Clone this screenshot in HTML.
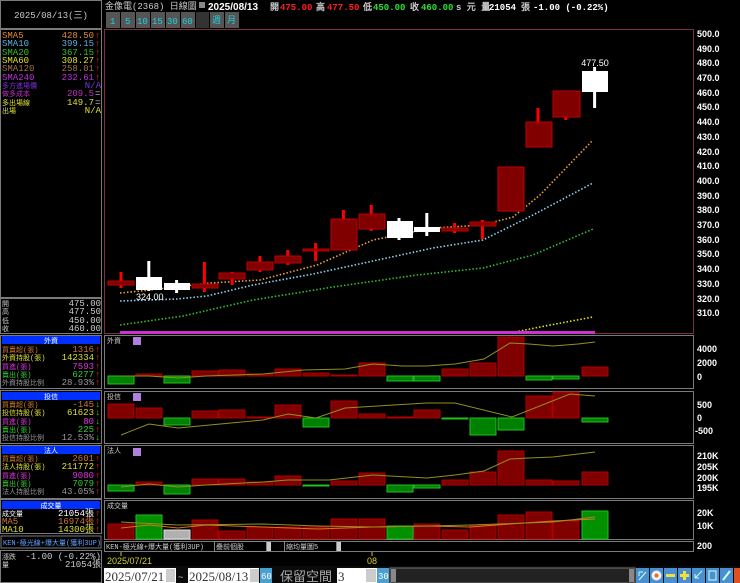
<!DOCTYPE html>
<html><head><meta charset="utf-8"><style>
html,body{margin:0;padding:0;background:#000;width:740px;height:583px;overflow:hidden}
svg{display:block}
text{font-family:"Liberation Mono","WenQuanYi Zen Hei",monospace;font-size:9px}
text.l{font-size:7px}
.ax{font-family:"Liberation Sans",sans-serif;font-weight:bold;font-size:9px;fill:#fff}
</style></head><body>
<svg width="740" height="583" viewBox="0 0 740 583" xmlns="http://www.w3.org/2000/svg">
<rect width="740" height="583" fill="#000"/>
<g fill="none" stroke="#7a7a7a" stroke-width="1">
<rect x="0.5" y="0.5" width="101" height="28"/>
<rect x="0.5" y="29.5" width="101" height="268"/>
<rect x="0.5" y="298.5" width="101" height="35"/>
<rect x="0.5" y="335.5" width="101" height="53"/>
<rect x="0.5" y="390.5" width="101" height="53"/>
<rect x="0.5" y="445.5" width="101" height="53"/>
<rect x="0.5" y="499.5" width="101" height="34"/>
<rect x="0.5" y="550.5" width="101" height="32"/>
</g>
<text x="51" y="18" fill="#ccc" text-anchor="middle" font-size="8">2025/08/13(三)</text>
<g font-size="8">
<text x="2" y="38" fill="#e08a30" font-size="7">SMA5</text><text x="94" y="38" fill="#e08a30" text-anchor="end">428.50</text>
<text x="2" y="46" fill="#60b0e0" font-size="7">SMA10</text><text x="94" y="46" fill="#60b0e0" text-anchor="end">399.15</text>
<text x="2" y="55" fill="#30c030" font-size="7">SMA20</text><text x="94" y="55" fill="#30c030" text-anchor="end">367.15</text>
<text x="2" y="63" fill="#e0e030" font-size="7">SMA60</text><text x="94" y="63" fill="#e0e030" text-anchor="end">308.27</text>
<text x="2" y="71" fill="#a07050" font-size="7">SMA120</text><text x="94" y="71" fill="#a07050" text-anchor="end">258.01</text>
<text x="2" y="80" fill="#c030e0" font-size="7">SMA240</text><text x="94" y="80" fill="#c030e0" text-anchor="end">232.61</text>
<text class="l" x="2" y="88" fill="#8030e0">多方進場價</text><text x="101" y="88" fill="#8030e0" text-anchor="end">N/A</text>
<text class="l" x="2" y="96" fill="#c030c0">做多成本</text><text x="94" y="96" fill="#c030c0" text-anchor="end">209.5</text>
<text class="l" x="2" y="105" fill="#e0e030">多出場線</text><text x="94" y="105" fill="#e0e030" text-anchor="end">149.7</text>
<text class="l" x="2" y="113" fill="#e0e030">出場</text><text x="101" y="113" fill="#e0e030" text-anchor="end">N/A</text>
<g fill="#ff2020"><text x="95" y="38">↑</text><text x="95" y="46">↑</text><text x="95" y="55">↑</text><text x="95" y="63">↑</text><text x="95" y="71">↑</text><text x="95" y="80">↑</text></g>
<g fill="#ccc"><text x="95" y="96">=</text><text x="95" y="105">=</text></g>
<g fill="#ccc">
<text class="l" x="2" y="306">開</text><text x="101" y="306" text-anchor="end">475.00</text>
<text class="l" x="2" y="314">高</text><text x="101" y="314" text-anchor="end">477.50</text>
<text class="l" x="2" y="323">低</text><text x="101" y="323" text-anchor="end">450.00</text>
<text class="l" x="2" y="331">收</text><text x="101" y="331" text-anchor="end">460.00</text>
</g>
<rect x="2" y="336" width="98" height="8" fill="#0030ff"/><text class="l" x="51" y="343" fill="#fff" text-anchor="middle">外資</text>
<text class="l" x="2" y="352" fill="#d07830">買賣超(張)</text><text x="94" y="352" fill="#d07830" text-anchor="end">1316</text>
<text class="l" x="2" y="360" fill="#e0e030">外資持股(張)</text><text x="94" y="360" fill="#e0e030" text-anchor="end">142334</text>
<text class="l" x="2" y="369" fill="#e030e0">買進(張)</text><text x="94" y="369" fill="#e030e0" text-anchor="end">7593</text>
<text class="l" x="2" y="377" fill="#30d030">賣出(張)</text><text x="94" y="377" fill="#30d030" text-anchor="end">6277</text>
<text class="l" x="2" y="385" fill="#999">外資持股比例</text><text x="94" y="385" fill="#999" text-anchor="end">28.93%</text>
<g fill="#ff2020"><text x="95" y="352">↑</text><text x="95" y="360">↑</text><text x="95" y="369">↑</text><text x="95" y="377">↑</text><text x="95" y="385">↑</text></g>
<rect x="2" y="392" width="98" height="8" fill="#0030ff"/><text class="l" x="51" y="399" fill="#fff" text-anchor="middle">投信</text>
<text class="l" x="2" y="407" fill="#d07830">買賣超(張)</text><text x="94" y="407" fill="#d07830" text-anchor="end">-145</text>
<text class="l" x="2" y="415" fill="#e0e030">投信持股(張)</text><text x="94" y="415" fill="#e0e030" text-anchor="end">61623</text>
<text class="l" x="2" y="424" fill="#e030e0">買進(張)</text><text x="94" y="424" fill="#e030e0" text-anchor="end">80</text>
<text class="l" x="2" y="432" fill="#30d030">賣出(張)</text><text x="94" y="432" fill="#30d030" text-anchor="end">225</text>
<text class="l" x="2" y="440" fill="#999">投信持股比例</text><text x="94" y="440" fill="#999" text-anchor="end">12.53%</text>
<g fill="#20d020"><text x="95" y="407">↓</text><text x="95" y="415">↓</text><text x="95" y="424">↓</text><text x="95" y="440">↓</text></g><text x="95" y="432" fill="#ff2020">↑</text>
<rect x="2" y="446" width="98" height="8" fill="#0030ff"/><text class="l" x="51" y="453" fill="#fff" text-anchor="middle">法人</text>
<text class="l" x="2" y="461" fill="#d07830">買賣超(張)</text><text x="94" y="461" fill="#d07830" text-anchor="end">2601</text>
<text class="l" x="2" y="469" fill="#e0e030">法人持股(張)</text><text x="94" y="469" fill="#e0e030" text-anchor="end">211772</text>
<text class="l" x="2" y="478" fill="#e030e0">買進(張)</text><text x="94" y="478" fill="#e030e0" text-anchor="end">9080</text>
<text class="l" x="2" y="486" fill="#30d030">賣出(張)</text><text x="94" y="486" fill="#30d030" text-anchor="end">7079</text>
<text class="l" x="2" y="494" fill="#999">法人持股比例</text><text x="94" y="494" fill="#999" text-anchor="end">43.05%</text>
<g fill="#ff2020"><text x="95" y="461">↑</text><text x="95" y="469">↑</text><text x="95" y="478">↑</text><text x="95" y="486">↑</text><text x="95" y="494">↑</text></g>
<rect x="2" y="501" width="98" height="8" fill="#0030ff"/><text class="l" x="51" y="508" fill="#fff" text-anchor="middle">成交量</text>
<text class="l" x="2" y="516" fill="#fff">成交量</text><text x="94" y="516" fill="#fff" text-anchor="end">21054張</text>
<text x="2" y="524" fill="#d07830" font-size="7">MA5</text><text x="94" y="524" fill="#d07830" text-anchor="end">16974張</text>
<text x="2" y="532" fill="#e0e030" font-size="7">MA10</text><text x="94" y="532" fill="#e0e030" text-anchor="end">14300張</text>
<g fill="#ff2020"><text x="95" y="516">↑</text><text x="95" y="524">↑</text><text x="95" y="532">↑</text></g>
<rect x="1" y="536" width="100" height="12" fill="#000" stroke="#7a7a7a"/>
<text class="l" x="3" y="545" fill="#60a0ff">KEN-極光線+爆大量(獲利3UP)</text>
<text class="l" x="2" y="559" fill="#ccc">漲跌</text><text x="101" y="559" fill="#ccc" text-anchor="end">-1.00 (-0.22%)</text>
<text class="l" x="2" y="567" fill="#ccc">量</text><text x="101" y="567" fill="#ccc" text-anchor="end">21054張</text>
</g>

<text x="105" y="9" fill="#ccc" font-size="8">金像電(2368)   日線圖</text>
<rect x="199" y="2" width="6" height="6" fill="#888"/>
<text x="208" y="10" style="font-family:'Liberation Sans',sans-serif;font-weight:bold;font-size:10px" fill="#fff">2025/08/13</text>
<g style="font-family:'Liberation Sans',sans-serif;font-weight:bold;font-size:9px">
<text x="270" y="10" fill="#ccc" font-size="8">開</text><text x="280" y="10" fill="#ff2020">475.00</text>
<text x="316" y="10" fill="#ccc" font-size="8">高</text><text x="327" y="10" fill="#ff2020">477.50</text>
<text x="363" y="10" fill="#ccc" font-size="8">低</text><text x="373" y="10" fill="#30e030">450.00</text>
<text x="410" y="10" fill="#ccc" font-size="8">收</text><text x="421" y="10" fill="#30e030">460.00</text>
<text x="456" y="10" fill="#ccc" font-size="8">s 元  量</text><text x="489" y="10" fill="#fff">21054</text>
<text x="521" y="10" fill="#ccc" font-size="8">張</text><text x="533" y="10" fill="#fff">-1.00 (-0.22%)</text>
</g>
<g style="font-family:'Liberation Sans',sans-serif;font-size:10px" fill="#20d0e0">
<rect x="106" y="12" width="14" height="16" fill="#555"/><text x="110" y="24">1</text>
<rect x="121" y="12" width="14" height="16" fill="#555"/><text x="125" y="24">5</text>
<rect x="136" y="12" width="14" height="16" fill="#555"/><text x="137" y="24">10</text>
<rect x="151" y="12" width="14" height="16" fill="#555"/><text x="152" y="24">15</text>
<rect x="166" y="12" width="14" height="16" fill="#555"/><text x="167" y="24">30</text>
<rect x="181" y="12" width="14" height="16" fill="#555"/><text x="182" y="24">60</text>
<rect x="196" y="12" width="13" height="16" fill="#333"/>
<rect x="210" y="12" width="14" height="16" fill="#555"/><text x="212" y="23" font-size="8">週</text>
<rect x="225" y="12" width="14" height="16" fill="#555"/><text x="227" y="23" font-size="8">月</text>
</g>

<rect x="104.5" y="29.5" width="589" height="304" fill="none" stroke="#7a3040"/>
<g class="ax">
<text x="697" y="37" class="ax">500.0</text><text x="697" y="52" class="ax">490.0</text><text x="697" y="66" class="ax">480.0</text>
<text x="697" y="81" class="ax">470.0</text><text x="697" y="96" class="ax">460.0</text><text x="697" y="110" class="ax">450.0</text>
<text x="697" y="125" class="ax">440.0</text><text x="697" y="140" class="ax">430.0</text><text x="697" y="155" class="ax">420.0</text>
<text x="697" y="169" class="ax">410.0</text><text x="697" y="184" class="ax">400.0</text><text x="697" y="199" class="ax">390.0</text>
<text x="697" y="213" class="ax">380.0</text><text x="697" y="228" class="ax">370.0</text><text x="697" y="243" class="ax">360.0</text>
<text x="697" y="257" class="ax">350.0</text><text x="697" y="272" class="ax">340.0</text><text x="697" y="287" class="ax">330.0</text>
<text x="697" y="302" class="ax">320.0</text><text x="697" y="316" class="ax">310.0</text>
</g>
<g fill="none" stroke-width="1.6" stroke-dasharray="1.5 2">
<polyline stroke="#f0a040" points="120,293 150,290 210,283 260,280 317,265 373,240 433,228 483,225 513,217 540,195 593,140"/>
<polyline stroke="#90d0f0" points="120,301 177,299 207,296 253,285 313,274 387,258 433,248 483,240 533,215 593,183"/>
<polyline stroke="#30c030" points="120,325 183,316 253,300 333,287 417,275 483,268 533,255 593,229"/>
<polyline stroke="#e0e020" points="515,332 545,326 593,317"/>
</g>
<rect x="120" y="331" width="475" height="3" fill="#d030d0"/>
<g>
<rect x="119.5" y="272" width="3" height="16" fill="#f00"/><rect x="108" y="281" width="26" height="4" fill="#800000" stroke="#c00000"/>
<rect x="147.3" y="261" width="3" height="30" fill="#fff"/><rect x="136" y="277" width="26" height="13" fill="#fff"/>
<rect x="175.1" y="280" width="3" height="13" fill="#fff"/><rect x="164" y="283" width="26" height="7" fill="#fff"/>
<rect x="202.9" y="262" width="3" height="30" fill="#f00"/><rect x="192" y="284" width="26" height="4" fill="#800000" stroke="#c00000"/>
<rect x="230.7" y="272" width="3" height="13" fill="#f00"/><rect x="219" y="273" width="26" height="6" fill="#800000" stroke="#c00000"/>
<rect x="258.5" y="256" width="3" height="16" fill="#f00"/><rect x="247" y="262" width="26" height="8" fill="#800000" stroke="#c00000"/>
<rect x="286.3" y="250" width="3" height="15" fill="#f00"/><rect x="275" y="256" width="26" height="7" fill="#800000" stroke="#c00000"/>
<rect x="314.1" y="243" width="3" height="18" fill="#f00"/><rect x="303" y="249" width="26" height="2" fill="#800000" stroke="#c00000"/>
<rect x="341.9" y="210" width="3" height="40" fill="#f00"/><rect x="331" y="219" width="26" height="31" fill="#800000" stroke="#c00000"/>
<rect x="369.7" y="205" width="3" height="26" fill="#f00"/><rect x="359" y="214" width="26" height="15" fill="#800000" stroke="#c00000"/>
<rect x="397.5" y="218" width="3" height="22" fill="#fff"/><rect x="387" y="221" width="26" height="17" fill="#fff"/>
<rect x="425.3" y="213" width="3" height="23" fill="#fff"/><rect x="414" y="227" width="26" height="5" fill="#fff"/>
<rect x="453.1" y="223" width="3" height="10" fill="#f00"/><rect x="442" y="228" width="26" height="3" fill="#800000" stroke="#c00000"/>
<rect x="480.9" y="220" width="3" height="19" fill="#f00"/><rect x="470" y="222" width="26" height="4" fill="#800000" stroke="#c00000"/>
<rect x="498" y="167" width="26" height="44" fill="#800000" stroke="#c00000"/>
<rect x="536.5" y="108" width="3" height="39" fill="#f00"/><rect x="526" y="122" width="26" height="25" fill="#800000" stroke="#c00000"/>
<rect x="564.3" y="91" width="3" height="29" fill="#f00"/><rect x="553" y="91" width="27" height="26" fill="#800000" stroke="#c00000"/>
<rect x="593.1" y="67" width="3" height="41" fill="#fff"/><rect x="582" y="71" width="26" height="21" fill="#fff"/>
</g>
<text x="595" y="66" fill="#fff" text-anchor="middle" style="font-family:'Liberation Sans',sans-serif;font-size:9px">477.50</text>
<text x="136" y="300" fill="#fff" style="font-family:'Liberation Sans',sans-serif;font-size:9px">324.00</text>

<g fill="none" stroke="#7a7a7a">
<rect x="104.5" y="335.5" width="589" height="53"/>
<rect x="104.5" y="391.5" width="589" height="52"/>
<rect x="104.5" y="445.5" width="589" height="53"/>
<rect x="104.5" y="500.5" width="589" height="39"/>
</g>
<g fill="#ccc"><text class="l" x="107" y="343">外資</text><text class="l" x="107" y="399">投信</text><text class="l" x="107" y="453">法人</text><text class="l" x="107" y="508">成交量</text></g>
<g fill="#b080e0"><rect x="133" y="337" width="8" height="8"/><rect x="133" y="393" width="8" height="8"/><rect x="133" y="448" width="8" height="8"/></g>
<g class="ax">
<text x="697" y="352" class="ax">4000</text><text x="697" y="366" class="ax">2000</text><text x="697" y="380" class="ax">0</text>
<text x="697" y="408" class="ax">500</text><text x="697" y="421" class="ax">0</text><text x="695" y="434" class="ax">-500</text>
<text x="697" y="459" class="ax">210K</text><text x="697" y="470" class="ax">205K</text><text x="697" y="481" class="ax">200K</text><text x="697" y="491" class="ax">195K</text>
<text x="697" y="516" class="ax">20K</text><text x="697" y="529" class="ax">10K</text><text x="697" y="549" class="ax">200</text>
</g>
<g stroke-width="1">
<g fill="#008000" stroke="#20c020">
<rect x="108" y="376" width="26" height="8"/><rect x="164" y="376" width="26" height="7"/><rect x="387" y="376" width="26" height="5"/><rect x="414" y="376" width="26" height="5"/><rect x="526" y="376" width="26" height="4"/><rect x="553" y="376" width="26" height="3"/>
</g>
<g fill="#800000" stroke="#b00000">
<rect x="136" y="374" width="26" height="2"/><rect x="192" y="371" width="26" height="5"/><rect x="219" y="370" width="26" height="6"/><rect x="247" y="374" width="26" height="2"/><rect x="275" y="369" width="26" height="7"/><rect x="303" y="373" width="26" height="3"/><rect x="331" y="375" width="26" height="1"/><rect x="359" y="363" width="26" height="13"/><rect x="442" y="369" width="26" height="7"/><rect x="470" y="363" width="26" height="13"/><rect x="498" y="337" width="26" height="39"/><rect x="582" y="367" width="26" height="9"/>
</g>
</g>
<polyline fill="none" stroke="#909020" stroke-width="1" points="121,376 149,376 178,378 206,376 263,374 304,370 345,369 373,364 402,366 427,366 455,364 484,359 510,343 529,344 553,346 578,344 595,342"/>
<g fill="#800000" stroke="#b00000">
<rect x="108" y="404" width="26" height="14"/><rect x="136" y="408" width="26" height="10"/><rect x="192" y="411" width="26" height="7"/><rect x="219" y="410" width="26" height="8"/><rect x="247" y="417" width="26" height="1"/><rect x="275" y="405" width="26" height="13"/><rect x="331" y="401" width="26" height="17"/><rect x="359" y="414" width="26" height="4"/><rect x="387" y="417" width="26" height="1"/><rect x="414" y="410" width="26" height="8"/><rect x="526" y="396" width="26" height="22"/><rect x="553" y="392" width="26" height="26"/>
</g>
<g fill="#008000" stroke="#20c020">
<rect x="164" y="418" width="26" height="7"/><rect x="303" y="418" width="26" height="9"/><rect x="442" y="418" width="26" height="1"/><rect x="470" y="418" width="26" height="17"/><rect x="498" y="418" width="26" height="12"/><rect x="582" y="418" width="26" height="4"/>
</g>
<polyline fill="none" stroke="#909020" stroke-width="1" points="121,435 149,424 178,428 263,420 288,414 316,418 345,408 427,403 455,403 512,417 570,394 595,396"/>
<g fill="#008000" stroke="#20c020">
<rect x="108" y="485" width="26" height="6"/><rect x="164" y="485" width="26" height="9"/><rect x="303" y="485" width="26" height="1"/><rect x="387" y="485" width="26" height="7"/><rect x="414" y="485" width="26" height="3"/>
</g>
<g fill="#800000" stroke="#b00000">
<rect x="136" y="482" width="26" height="3"/><rect x="192" y="479" width="26" height="6"/><rect x="219" y="479" width="26" height="6"/><rect x="247" y="482" width="26" height="3"/><rect x="275" y="476" width="26" height="9"/><rect x="331" y="481" width="26" height="4"/><rect x="359" y="473" width="26" height="12"/><rect x="442" y="480" width="26" height="5"/><rect x="470" y="472" width="26" height="13"/><rect x="498" y="451" width="26" height="34"/><rect x="526" y="480" width="26" height="5"/><rect x="553" y="481" width="26" height="4"/><rect x="582" y="472" width="26" height="13"/>
</g>
<polyline fill="none" stroke="#909020" stroke-width="1" points="121,487 149,484 178,487 206,485 263,482 288,480 329,480 373,475 427,478 455,475 484,471 510,459 529,458 553,457 595,452"/>
<g fill="#800000" stroke="#b00000">
<rect x="108" y="524" width="26" height="15"/><rect x="192" y="520" width="26" height="19"/><rect x="219" y="531" width="26" height="8"/><rect x="247" y="527" width="26" height="12"/><rect x="275" y="527" width="26" height="12"/><rect x="303" y="527" width="26" height="12"/><rect x="331" y="519" width="26" height="20"/><rect x="359" y="519" width="26" height="20"/><rect x="414" y="524" width="26" height="15"/><rect x="442" y="530" width="26" height="9"/><rect x="470" y="525" width="26" height="14"/><rect x="498" y="515" width="26" height="24"/><rect x="526" y="512" width="26" height="27"/><rect x="553" y="521" width="26" height="18"/>
</g>
<g fill="#009000" stroke="#20c020"><rect x="136" y="515" width="26" height="24"/><rect x="387" y="526" width="26" height="13"/><rect x="582" y="511" width="26" height="28"/></g>
<rect x="164" y="530" width="26" height="9" fill="#b0b0b0" stroke="#e0e0e0"/>
<polyline fill="none" stroke="#e07020" stroke-width="1" points="121,528 149,525 178,528 206,525 263,527 318,529 373,527 427,526 470,527 510,524 553,521 595,519"/>
<polyline fill="none" stroke="#909020" stroke-width="1" points="121,522 178,525 263,524 318,526 373,527 427,526 470,525 553,522 595,517"/>
<rect x="104.5" y="541.5" width="589" height="10" fill="#000" stroke="#7a7a7a"/>
<text class="l" x="106" y="549" fill="#ccc">KEN-極光線+爆大量(獲利3UP)</text>
<rect x="214.5" y="541.5" width="52" height="10" fill="#000" stroke="#888"/><text class="l" x="216" y="549" fill="#ccc">疊前個股</text>
<rect x="267" y="542" width="4" height="9" fill="#ccc"/>
<rect x="284.5" y="541.5" width="52" height="10" fill="#000" stroke="#888"/><text class="l" x="286" y="549" fill="#ccc">縮均量圖5</text>
<rect x="337" y="542" width="4" height="9" fill="#ccc"/>
<line x1="121" y1="552" x2="121" y2="556" stroke="#c0c040"/><line x1="372" y1="552" x2="372" y2="556" stroke="#c0c040"/>
<text x="107" y="564" fill="#d0d030" style="font-family:'Liberation Sans',sans-serif;font-size:9px">2025/07/21</text>
<text x="367" y="564" fill="#d0d030" style="font-family:'Liberation Sans',sans-serif;font-size:9px">08</text>
<rect x="102" y="566" width="638" height="17" fill="#0a0a0a"/>
<rect x="104" y="568" width="72" height="15" fill="#fff"/><text x="105" y="581" fill="#333" style="font-family:'Liberation Serif',serif;font-size:13px">2025/07/21</text>
<rect x="166" y="569" width="9" height="13" fill="#ccc"/>
<text x="178" y="580" fill="#ccc" font-size="10">~</text>
<rect x="188" y="568" width="71" height="15" fill="#fff"/><text x="189" y="581" fill="#333" style="font-family:'Liberation Serif',serif;font-size:13px">2025/08/13</text>
<rect x="250" y="569" width="9" height="13" fill="#ccc"/>
<rect x="260" y="568" width="12" height="15" fill="#4aa0d0"/><text x="261" y="579" fill="#fff" font-size="7">60</text>
<text x="280" y="581" fill="#aaa" style="font-family:'Liberation Sans','WenQuanYi Zen Hei',sans-serif;font-size:13px">保留空間</text>
<rect x="337" y="568" width="40" height="15" fill="#fff"/><text x="338" y="581" fill="#333" style="font-family:'Liberation Serif',serif;font-size:13px">3</text>
<rect x="366" y="569" width="10" height="13" fill="#ccc"/>
<rect x="377" y="568" width="12" height="15" fill="#4aa0d0"/><text x="378" y="579" fill="#fff" font-size="7">30</text>
<rect x="390" y="568" width="245" height="15" fill="#222" stroke="#777"/>
<rect x="391" y="569" width="5" height="13" fill="#888"/><rect x="629" y="569" width="5" height="13" fill="#888"/>
<g>
<rect x="636" y="568" width="13" height="15" fill="#4a90d0"/><path d="M639 580 L646 572 M639 572 H643 M639 572 V576" stroke="#cfe" fill="none"/>
<rect x="650" y="568" width="13" height="15" fill="#4a90d0"/><circle cx="656.5" cy="575.5" r="5" fill="#f0f0f0"/><circle cx="656.5" cy="575.5" r="2" fill="#e07020"/>
<rect x="664" y="568" width="13" height="15" fill="#4a90d0"/><rect x="666" y="574" width="9" height="3" fill="#f0e040"/>
<rect x="678" y="568" width="13" height="15" fill="#4a90d0"/><rect x="680" y="574" width="9" height="3" fill="#f0e040"/><rect x="683" y="571" width="3" height="9" fill="#f0e040"/>
<rect x="692" y="568" width="13" height="15" fill="#4a90d0"/><path d="M695 578 L702 571 M695 578 V574 M695 578 H699" stroke="#cfe" fill="none"/>
<rect x="706" y="568" width="13" height="15" fill="#4a90d0"/><rect x="709" y="571" width="7" height="9" fill="none" stroke="#cfe"/>
<rect x="720" y="568" width="13" height="15" fill="#4a90d0"/><path d="M723 580 L730 571" stroke="#cfe" stroke-width="2"/>
<rect x="734" y="568" width="6" height="15" fill="#e05020"/>
</g>
</svg>
</body></html>
